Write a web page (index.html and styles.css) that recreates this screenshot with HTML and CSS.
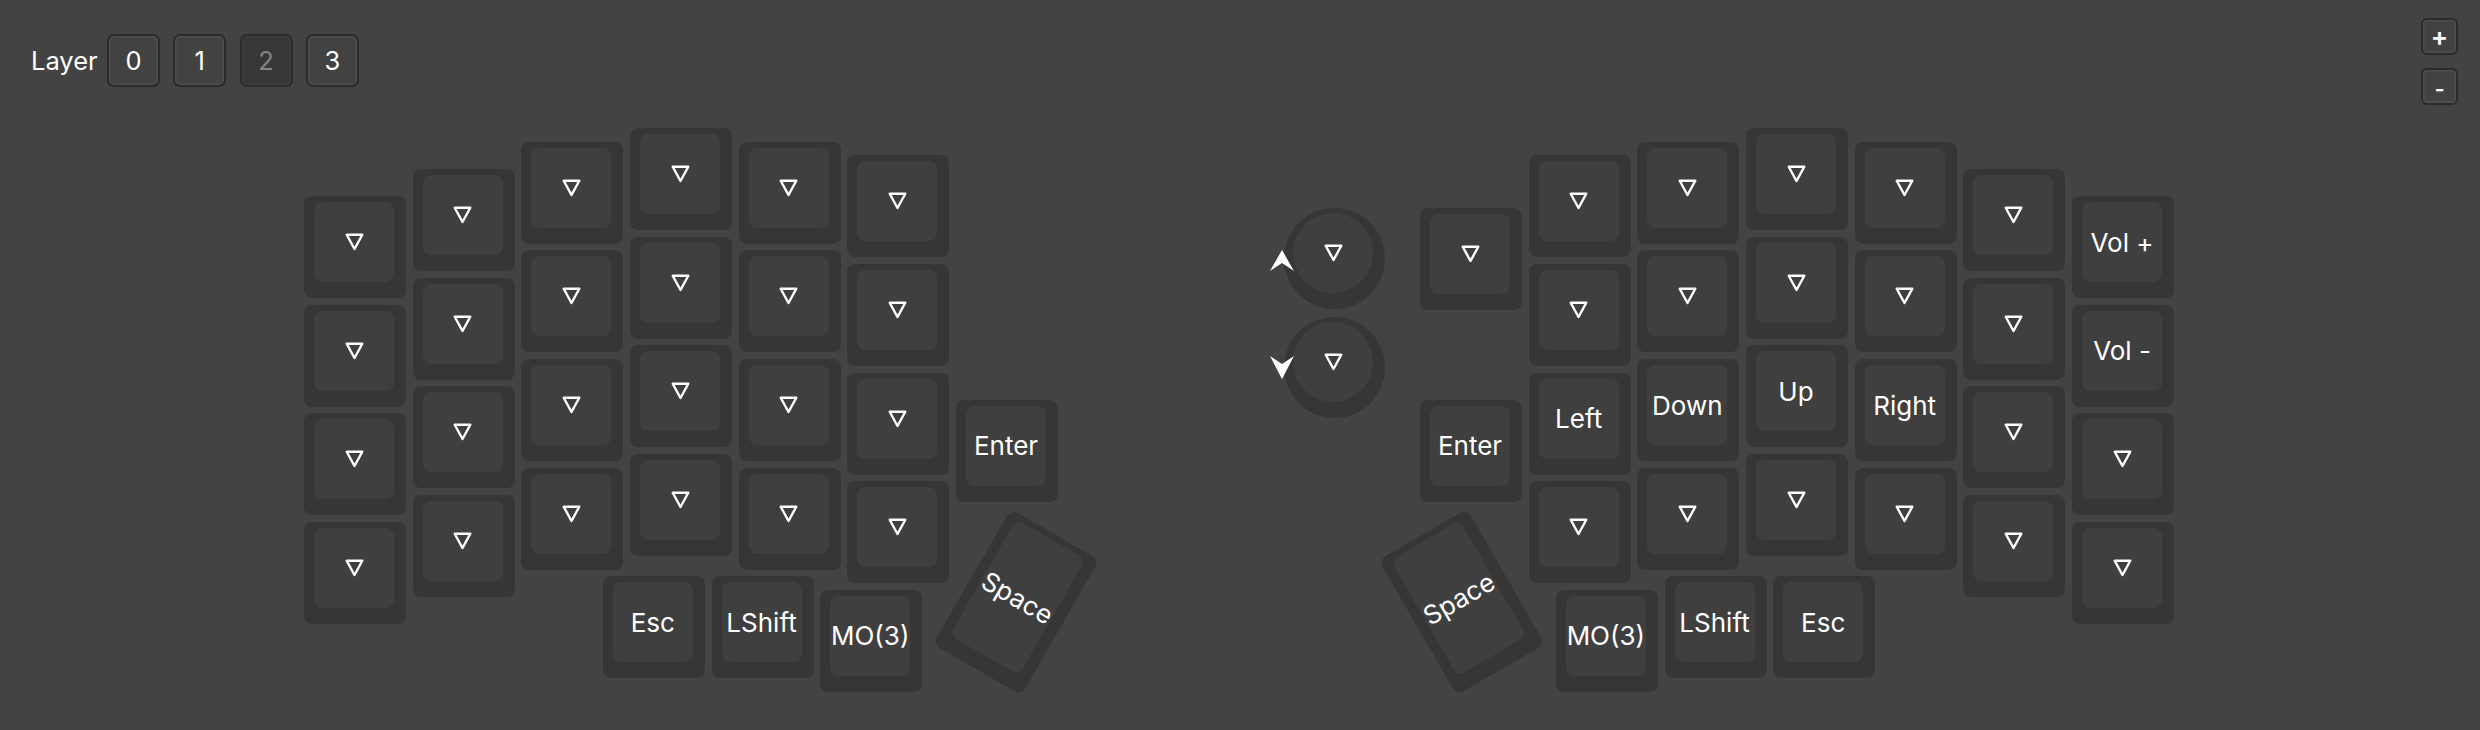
FILE: index.html
```html
<!DOCTYPE html>
<html lang="en">
<head>
    <meta charset="UTF-8">
    <meta name="viewport" content="width=device-width, initial-scale=1.0">
    <title>Keymap Editor</title>
    <link rel="stylesheet" href="styles.css">
    <script defer src="main.js"></script>
</head>
<body>
    <!-- Layer picker and zoom controls -->
    <div class="toolbar">
        <div class="layers">
            <span class="layers-label">Layer</span>
            <button class="layer-btn">0</button>
            <button class="layer-btn">1</button>
            <button class="layer-btn active">2</button>
            <button class="layer-btn">3</button>
        </div>
        <div class="zoom">
            <button class="zoom-btn">+</button>
            <button class="zoom-btn minus">-</button>
        </div>
    </div>

    <!-- Keys are placed by main.js from the layout data -->
    <div id="board" class="board"></div>
</body>
</html>
```

FILE: styles.css
```css
body {
    margin: 0;
    padding: 0;
    background-color: #434343;
    color: #fff;
    font-family: Inter, "Noto Sans", sans-serif;
}

/* Toolbar */
.toolbar {
    display: flex;
    justify-content: space-between;
    align-items: flex-start;
    padding: 18px 22px 0 31px;
}

.layers {
    display: flex;
    align-items: center;
    gap: 13.3px;
    margin-top: 16px;
    font-size: 25.5px;
}

.layers-label {
    margin-right: -4px;
}

.layer-btn,
.zoom-btn {
    box-sizing: border-box;
    padding: 0;
    border: 2px solid #2b2b2b;
    border-radius: 7px;
    background-color: #424242;
    box-shadow: inset 0 0 0 1.5px #4f4f4f;
    color: #fff;
    font-family: inherit;
    cursor: pointer;
}

.layer-btn {
    width: 53px;
    height: 53px;
    font-size: 25.5px;
}

.layer-btn.active {
    background-color: #373737;
    box-shadow: inset 0 0 0 1.5px #3f3f3f;
    color: #858585;
}

.zoom {
    display: flex;
    flex-direction: column;
    gap: 13px;
}

.zoom-btn {
    width: 37px;
    height: 37px;
    border-radius: 6px;
    font-size: 26px;
    font-weight: 600;
    line-height: 1;
}

.zoom-btn.minus {
    padding-top: 4px;
    font-size: 22px;
}

/* Keyboard canvas */
.board {
    position: relative;
    width: 1872px;
    height: 570px;
    margin: 23px 0 0 304px;
}

.key {
    position: absolute;
    box-sizing: border-box;
    width: 102px;
    height: 102px;
    padding: 6px 12px 16px 10px;
    border-radius: 8px;
    background-color: #363636;
}

.cap {
    display: flex;
    align-items: center;
    justify-content: center;
    height: 100%;
    border-radius: 8px;
    background-color: #3f3f3f;
    font-size: 26px;
    white-space: nowrap;
}

.tri path {
    fill: none;
    stroke: #fff;
    stroke-width: 2.4;
    stroke-linejoin: round;
}

/* Rotary encoders */
.encoder {
    position: absolute;
    box-sizing: border-box;
    width: 101px;
    height: 101px;
    padding: 5px 12px 16px 9px;
    border-radius: 50%;
    background-color: #363636;
}

.encoder .cap {
    border-radius: 50%;
}

.encoder-arrow {
    position: absolute;
    left: -14px;
    top: 42px;
    fill: #fff;
}

.encoder-arrow.down {
    top: 39px;
}
```

FILE: main.js
```js
const UNIT = 108.67; // one key unit in px
const GAP = 6.67;
const TOP = 68; // y of the home row top inside the board

const TRI = '<svg class="tri" width="19" height="18" viewBox="0 0 19 18"><path d="M1.7 1.7 H17.3 L9.5 16 Z"/></svg>';
const ARROW_UP = '<svg class="encoder-arrow" width="24" height="22" viewBox="0 0 24 22"><path d="M12 0 L24 21 L12 13 L0 21 Z"/></svg>';
const ARROW_DOWN = '<svg class="encoder-arrow down" width="24" height="24" viewBox="0 0 24 24"><path d="M0 0 L12 8 L24 0 L12 23 Z"/></svg>';

const T = null; // transparent key

function column(x, y, labels) {
    return labels.map((label, i) => ({ x: x, y: y + i, label: label }));
}

const halves = [
    {
        origin: 0,
        encoders: [],
        keys: [
            ...column(0, 0, [T, T, T, T]),
            ...column(1, -0.25, [T, T, T, T]),
            ...column(2, -0.5, [T, T, T, T]),
            ...column(3, -0.625, [T, T, T, T]),
            ...column(4, -0.5, [T, T, T, T]),
            ...column(5, -0.375, [T, T, T, T]),
            { x: 6, y: 1.875, label: 'Enter' },
            { x: 2.75, y: 3.5, label: 'Esc' },
            { x: 3.75, y: 3.5, label: 'LShift' },
            { x: 4.75, y: 3.625, label: 'MO(3)' },
            { x: 6.08, y: 3.02, h: 1.5, r: 30, label: 'Space' }
        ]
    },
    {
        origin: 1116,
        encoders: [
            { x: -1.25, y: 0.11, arrow: ARROW_UP },
            { x: -1.25, y: 1.11, arrow: ARROW_DOWN }
        ],
        keys: [
            { x: 0, y: 0.11, label: T },
            { x: 0, y: 1.875, label: 'Enter' },
            ...column(1, -0.375, [T, T, 'Left', T]),
            ...column(2, -0.5, [T, T, 'Down', T]),
            ...column(3, -0.625, [T, T, 'Up', T]),
            ...column(4, -0.5, [T, T, 'Right', T]),
            ...column(5, -0.25, [T, T, T, T]),
            ...column(6, 0, ['Vol +', 'Vol -', T, T]),
            { x: 1.25, y: 3.625, label: 'MO(3)' },
            { x: 2.25, y: 3.5, label: 'LShift' },
            { x: 3.25, y: 3.5, label: 'Esc' },
            { x: -0.08, y: 3.02, h: 1.5, r: -30, label: 'Space' }
        ]
    }
];

function renderBoard() {
    const board = document.getElementById('board');

    halves.forEach(half => {
        half.encoders.forEach(enc => {
            const el = document.createElement('div');
            el.className = 'encoder';
            el.style.left = (half.origin + enc.x * UNIT) + 'px';
            el.style.top = (TOP + enc.y * UNIT) + 'px';
            el.innerHTML = '<div class="cap">' + TRI + '</div>' + enc.arrow;
            board.appendChild(el);
        });

        half.keys.forEach(k => {
            const el = document.createElement('div');
            el.className = 'key';
            el.style.left = (half.origin + k.x * UNIT) + 'px';
            el.style.top = (TOP + k.y * UNIT) + 'px';
            if (k.h) el.style.height = (k.h * UNIT - GAP) + 'px';
            if (k.r) el.style.transform = 'rotate(' + k.r + 'deg)';
            el.innerHTML = '<div class="cap">' + (k.label ? '<span>' + k.label + '</span>' : TRI) + '</div>';
            board.appendChild(el);
        });
    });
}

renderBoard();
```
